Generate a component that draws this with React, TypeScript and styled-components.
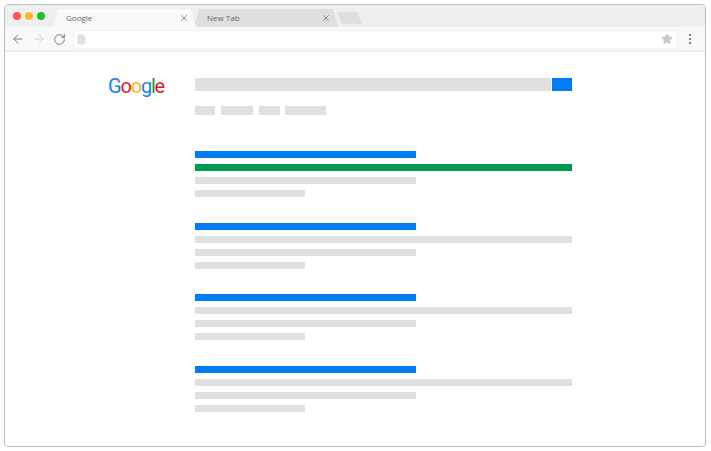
import React from "react";
import styled, { createGlobalStyle } from "styled-components";
import { ArrowLeft, ArrowRight, RotateCw, X, Star, File } from "lucide-react";

const Global = createGlobalStyle`
  html, body { margin: 0; padding: 0; background: #fff; }
  body { font-family: "Open Sans", "Liberation Sans", sans-serif; }
`;

const Page = styled.div`
  width: 711px;
  height: 451px;
  padding: 4px 5px 4px 4px;
  box-sizing: border-box;
`;
const Browser = styled.div`
  height: 443px;
  border: 1px solid #bdbdbd;
  border-radius: 4px;
  box-sizing: border-box;
  overflow: hidden;
  background: #fff;
`;
const TabStrip = styled.div`
  height: 22px;
  background: #eeeff1;
  display: flex;
  align-items: flex-end;
`;
const Lights = styled.div`
  display: flex;
  gap: 4px;
  width: 48px;
  padding: 7px 0 0 8px;
  box-sizing: border-box;
  align-self: flex-start;
`;
const Light = styled.span<{ $c: string }>`
  width: 8px;
  height: 8px;
  border-radius: 50%;
  background: ${(p) => p.$c};
`;
const Tab = styled.div<{ $active?: boolean }>`
  width: ${(p) => (p.$active ? 143 : 144)}px;
  height: 18px;
  margin-right: -2px;
  background: ${(p) => (p.$active ? "#f8f9fb" : "#dfdfe1")};
  clip-path: polygon(0 100%, 5px 0, calc(100% - 5px) 0, 100% 100%);
  display: flex;
  align-items: center;
  padding: 0 7px 0 13px;
  box-sizing: border-box;
  justify-content: space-between;
  position: relative;
  z-index: ${(p) => (p.$active ? 2 : 1)};
`;
const TabLabel = styled.span`
  font-size: 8px;
  line-height: 18px;
  color: #666;
`;
const NewTab = styled.div`
  width: 25px;
  height: 12px;
  margin: 0 0 3px 1px;
  background: #dfdfe1;
  clip-path: polygon(5px 100%, 0 0, 20px 0, 100% 100%);
`;
const Toolbar = styled.div`
  height: 23px;
  background: #f8f9fb;
  display: flex;
  align-items: center;
  padding: 1px 7px 0 6px;
  box-sizing: border-box;
  gap: 4px;
`;
const NavGroup = styled.div`
  display: flex;
  align-items: center;
  gap: 7px;
  width: 58px;
  flex: none;
`;
const Address = styled.div`
  flex: 1;
  height: 19px;
  background: #fff;
  border: 1px solid #f0f0f2;
  border-radius: 2px;
  box-sizing: border-box;
  display: flex;
  align-items: center;
  justify-content: space-between;
  padding: 0 4px 0 2px;
`;
const Dots = styled.div`
  width: 16px;
  display: flex;
  flex-direction: column;
  align-items: center;
  gap: 1.5px;
  flex: none;
`;
const Dot = styled.span`
  width: 2.2px;
  height: 2.2px;
  background: #555;
  border-radius: 50%;
`;
const Divider = styled.div`
  height: 2px;
  background: #eeeeef;
`;
const Content = styled.div`
  display: grid;
  grid-template-columns: 86px 377px;
  padding: 26px 0 0 104px;
`;
const Logo = styled.div`
  font-family: "Roboto", "Open Sans", sans-serif;
  font-size: 20px;
  font-weight: 400;
  line-height: 22px;
  letter-spacing: -1.2px;
  margin: -3px 0 0 -1px;
  height: 22px;
`;
const Letter = styled.span<{ $c: string }>`
  color: ${(p) => p.$c};
`;
const Main = styled.div`
  display: flex;
  flex-direction: column;
`;
const SearchRow = styled.div`
  display: flex;
  gap: 1px;
  height: 13px;
`;
const SearchField = styled.div`
  flex: 1;
  background: #e0e0e0;
`;
const SearchButton = styled.div`
  width: 20px;
  background: #007df4;
`;
const Chips = styled.div`
  display: flex;
  gap: 5.5px;
  margin-top: 15px;
  height: 9px;
`;
const Chip = styled.div<{ $w: number }>`
  width: ${(p) => p.$w}px;
  background: #e0e0e0;
`;
const Results = styled.div`
  display: flex;
  flex-direction: column;
  margin-top: 36px;
  gap: 25.5px;
`;
const Result = styled.div`
  display: flex;
  flex-direction: column;
  gap: 6px;
`;
const Bar = styled.div<{ $w: number; $c?: string }>`
  width: ${(p) => p.$w}px;
  height: 7px;
  background: ${(p) => p.$c ?? "#e0e0e0"};
`;

const rows = [0, 1, 2, 3];

export default function App() {
  return (
    <Page>
      <Global />
      <Browser>
        <TabStrip>
          <Lights>
            <Light $c="#fc5753" />
            <Light $c="#fdb92c" />
            <Light $c="#1fc31f" />
          </Lights>
          <Tab $active>
            <TabLabel>Google</TabLabel>
            <X size={10} color="#666" strokeWidth={1.7} />
          </Tab>
          <Tab>
            <TabLabel>New Tab</TabLabel>
            <X size={10} color="#666" strokeWidth={1.7} />
          </Tab>
          <NewTab />
        </TabStrip>
        <Toolbar>
          <NavGroup>
            <ArrowLeft size={14} color="#6e6e6e" strokeWidth={1.5} />
            <ArrowRight size={14} color="#d0d0d0" strokeWidth={1.5} />
            <RotateCw size={13} color="#6e6e6e" strokeWidth={1.7} />
          </NavGroup>
          <Address>
            <File size={11} color="#dcdcdc" fill="#e2e2e2" strokeWidth={1.5} />
            <Star size={12} color="#c8c8c8" fill="#c8c8c8" />
          </Address>
          <Dots>
            <Dot />
            <Dot />
            <Dot />
          </Dots>
        </Toolbar>
        <Divider />
        <Content>
          <Logo>
            <Letter $c="#1a7ff0">G</Letter>
            <Letter $c="#e9151b">o</Letter>
            <Letter $c="#fbb905">o</Letter>
            <Letter $c="#1a7ff0">g</Letter>
            <Letter $c="#0f9d46">l</Letter>
            <Letter $c="#e9151b">e</Letter>
          </Logo>
          <Main>
            <SearchRow>
              <SearchField />
              <SearchButton />
            </SearchRow>
            <Chips>
              <Chip $w={20} />
              <Chip $w={32.5} />
              <Chip $w={21} />
              <Chip $w={41} />
            </Chips>
            <Results>
              {rows.map((r) => (
                <Result key={r}>
                  <Bar $w={221} $c="#007df4" />
                  <Bar $w={377} $c={r === 0 ? "#009a4e" : undefined} />
                  <Bar $w={221} />
                  <Bar $w={110} />
                </Result>
              ))}
            </Results>
          </Main>
        </Content>
      </Browser>
    </Page>
  );
}
